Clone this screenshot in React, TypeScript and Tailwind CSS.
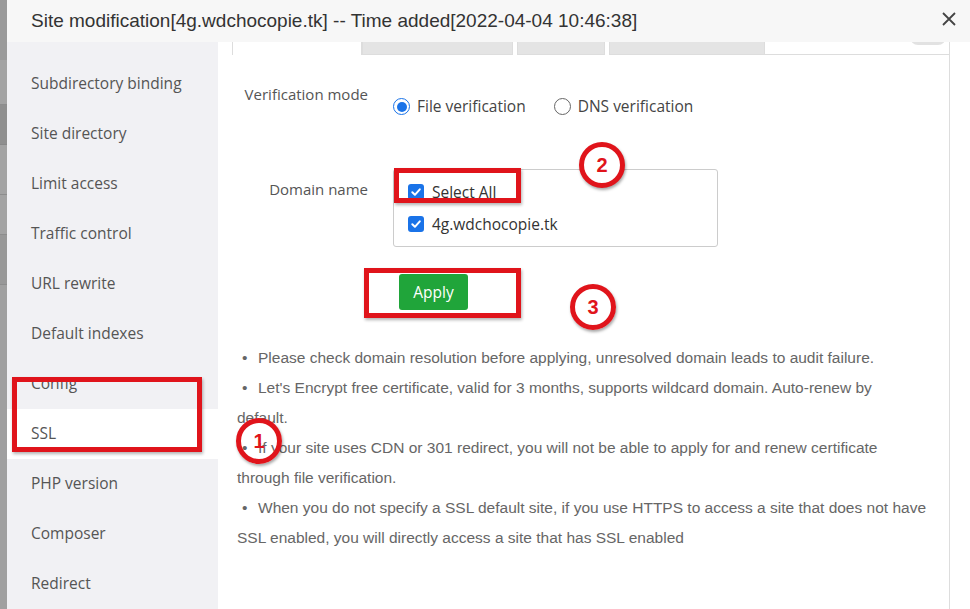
import React from "react";

const sideItems = [
  "Subdirectory binding",
  "Site directory",
  "Limit access",
  "Traffic control",
  "URL rewrite",
  "Default indexes",
  "Config",
  "SSL",
  "PHP version",
  "Composer",
  "Redirect",
];

const Check = () => (
  <span className="w-[16px] h-[16px] rounded-[3px] bg-[#1a73e8] flex items-center justify-center shrink-0">
    <svg width="12" height="12" viewBox="0 0 12 12">
      <path d="M2.3 6.3 L4.9 8.8 L9.8 3.3" fill="none" stroke="white" strokeWidth="2" strokeLinecap="round" strokeLinejoin="round" />
    </svg>
  </span>
);

const Circle = ({ n, cls }: { n: string; cls: string }) => (
  <div
    className={`absolute w-[46px] h-[46px] rounded-full border-[5px] border-[#e0141b] flex items-center justify-center text-[#e0141b] font-bold text-[20px] shadow-[1px_2px_3px_rgba(0,0,0,0.35)] ${cls}`}
    style={{ fontFamily: '"Liberation Sans", Arial, sans-serif' }}
  >
    {n}
  </div>
);

const Bullet = ({ children }: { children: React.ReactNode }) => (
  <li>
    <span className="inline-block w-[21px] pl-[5px]">•</span>
    {children}
  </li>
);

export default function App() {
  return (
    <div
      className="w-[970px] h-[609px] relative overflow-hidden flex bg-white"
      style={{ fontFamily: '"Open Sans", "Noto Sans", sans-serif' }}
    >
      {/* background page strip */}
      <div className="w-[7px] h-full bg-[#a3a3a3] flex flex-col shrink-0">
        <div className="h-[60px] bg-[#9a9a9a]" />
        <div className="h-[45px] border-b border-[#8d8d8d]" />
        <div className="h-[40px] bg-[#8f8f8f] border-b border-[#888]" />
        <div className="h-[50px] border-b border-[#8d8d8d]" />
        <div className="h-[40px] border-b border-[#8d8d8d]" />
        <div className="h-[50px] bg-[#989898] border-b border-[#8d8d8d]" />
        <div className="flex-1 bg-[#a0a0a0]" />
      </div>

      <div className="flex-1 flex flex-col">
        {/* header */}
        <div className="h-[42px] bg-[#f7f7f7] flex items-center justify-between pl-[24px] pr-[13px] shrink-0">
          <span className="text-[19px] text-[#333]" style={{ fontFamily: '"Liberation Sans", Arial, sans-serif' }}>
            Site modification[4g.wdchocopie.tk] -- Time added[2022-04-04 10:46:38]
          </span>
          <svg width="16" height="16" viewBox="0 0 16 16" className="mb-[4px]">
            <path d="M2 2 L14 14 M14 2 L2 14" stroke="#444" strokeWidth="1.8" />
          </svg>
        </div>

        <div className="flex flex-1 min-h-0">
          {/* sidebar */}
          <div className="w-[211px] bg-[#f1f1f4] pt-[17px] shrink-0">
            {sideItems.map((s) => (
              <div
                key={s}
                className={`h-[50px] flex items-center pl-[24px] text-[15.5px] text-[#555] ${s === "SSL" ? "bg-white" : ""}`}
              >
                {s}
              </div>
            ))}
          </div>

          {/* content */}
          <div className="flex-1 pl-[14px] pr-[20px]">
            <div className="border-r border-[#ddd] h-full flex flex-col">
              {/* tabs (scrolled, cut off) */}
              <div className="h-[13px] flex items-end overflow-hidden relative">
                <div className="h-[50px] w-[130px] border-l border-r border-[#ddd] bg-white flex justify-center text-[14px] text-[#333] pt-[12px]">
                  Let's Encrypt
                </div>
                <div className="h-[50px] w-[151px] bg-[#e4e4e4] border border-[#ddd]" />
                <div className="w-[4px]" />
                <div className="h-[50px] w-[88px] bg-[#e4e4e4] border border-[#ddd]" />
                <div className="w-[4px]" />
                <div className="h-[50px] w-[156px] bg-[#e4e4e4] border border-[#ddd]" />
                <div className="flex-1 h-full border-b border-[#ddd] relative">
                  <div className="absolute right-[3px] top-[-13px] w-[36px] h-[16px] rounded-full bg-[#e2e2e2]" />
                </div>
              </div>

              {/* form */}
              <div className="pt-[22px]">
                <div className="flex">
                  <div className="w-[136px] text-right text-[15px] text-[#555] pt-[6px]">
                    <span className="inline-block text-left">Verification mode</span>
                  </div>
                  <div className="pl-[25px] flex items-center gap-[7px] pt-[18px] text-[15.5px] text-[#444]">
                    <span className="w-[17px] h-[17px] rounded-full border-[1.5px] border-[#1a73e8] flex items-center justify-center">
                      <span className="w-[10px] h-[10px] rounded-full bg-[#1a73e8]" />
                    </span>
                    <span>File verification</span>
                    <span className="w-[17px] h-[17px] rounded-full border border-[#666] ml-[21px]" />
                    <span>DNS verification</span>
                  </div>
                </div>

                <div className="flex mt-[51px]">
                  <div className="w-[136px] text-right text-[15px] text-[#555] pt-[9px]">Domain name</div>
                  <div className="ml-[25px] w-[325px] h-[78px] border border-[#ccc] rounded-[3px] pl-[14px] pt-[13px] flex flex-col gap-[14px] text-[15.5px] text-[#333]">
                    <div className="flex items-center gap-[8px] h-[18px]">
                      <Check />
                      <span>Select All</span>
                    </div>
                    <div className="flex items-center gap-[8px] h-[18px]">
                      <Check />
                      <span>4g.wdchocopie.tk</span>
                    </div>
                  </div>
                </div>

                <div className="pl-[167px] mt-[27px]">
                  <div className="w-[69px] h-[36px] rounded-[3px] bg-[#20a53a] text-white text-[15.5px] flex items-center justify-center">
                    Apply
                  </div>
                </div>

                <ul
                  className="mt-[33px] text-[15.5px] leading-[30px] text-[#666] pl-[5px] pr-0"
                  style={{ fontFamily: '"Liberation Sans", Arial, sans-serif' }}
                >
                  <Bullet>Please check domain resolution before applying, unresolved domain leads to audit failure.</Bullet>
                  <Bullet>
                    Let's Encrypt free certificate, valid for 3 months, supports wildcard domain. Auto-renew by
                    <br />
                    default.
                  </Bullet>
                  <Bullet>
                    If your site uses CDN or 301 redirect, you will not be able to apply for and renew certificate
                    <br />
                    through file verification.
                  </Bullet>
                  <Bullet>When you do not specify a SSL default site, if you use HTTPS to access a site that does not have SSL enabled, you will directly access a site that has SSL enabled</Bullet>
                </ul>
              </div>
            </div>
          </div>
        </div>
      </div>

      {/* annotations */}
      <div className="absolute left-[12px] top-[377px] w-[190px] h-[75px] border-[5px] border-[#e0141b] shadow-[1px_2px_3px_rgba(0,0,0,0.3)]" />
      <div className="absolute left-[394px] top-[168px] w-[127px] h-[35px] border-[5px] border-[#e0141b] shadow-[1px_2px_3px_rgba(0,0,0,0.3)]" />
      <div className="absolute left-[364px] top-[268px] w-[157px] h-[50px] border-[5px] border-[#e0141b] shadow-[1px_2px_3px_rgba(0,0,0,0.3)]" />
      <Circle n="1" cls="left-[236px] top-[418px]" />
      <Circle n="2" cls="left-[579px] top-[142px] bg-white" />
      <Circle n="3" cls="left-[570px] top-[284px]" />
    </div>
  );
}
